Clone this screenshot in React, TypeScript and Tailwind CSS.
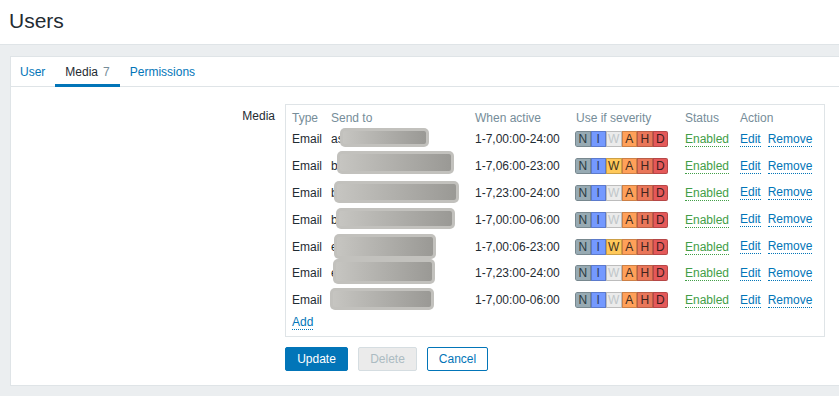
import React from 'react'

interface MediaRow {
  period: string
  prefix: string
  warn: boolean
  blob: { left: number; top: number; w: number; h: number }
}

const rows: MediaRow[] = [
  { period: '1-7,00:00-24:00', prefix: 'as', warn: false, blob: { left: 9, top: 2, w: 89, h: 19 } },
  { period: '1-7,06:00-23:00', prefix: 'b', warn: true, blob: { left: 6, top: -2, w: 117, h: 23 } },
  { period: '1-7,23:00-24:00', prefix: 'b', warn: false, blob: { left: 3, top: 1, w: 125, h: 22 } },
  { period: '1-7,00:00-06:00', prefix: 'b', warn: false, blob: { left: 5, top: 2, w: 119, h: 21 } },
  { period: '1-7,00:06-23:00', prefix: 'e', warn: true, blob: { left: 3, top: 1, w: 102, h: 25 } },
  { period: '1-7,23:00-24:00', prefix: 'e', warn: false, blob: { left: 2, top: -1, w: 102, h: 25 } },
  { period: '1-7,00:00-06:00', prefix: '', warn: false, blob: { left: -1, top: 1, w: 104, h: 22 } },
]

function Severity({ warn }: { warn: boolean }) {
  const cell = 'w-[15.5px] h-[16px] flex items-center justify-center border border-black/20 text-[12px]'
  return (
    <div className="flex rounded-[2px] overflow-hidden">
      <div className={`${cell} bg-[#97aab3] text-[#2b3a42] rounded-l-[2px]`}>N</div>
      <div className={`${cell} bg-[#7499ff] text-[#2b3a60]`}>I</div>
      {warn ? (
        <div className={`${cell} bg-[#ffc859] text-[#3d3420]`}>W</div>
      ) : (
        <div className={`${cell} bg-[#ebebeb] text-[#c0c6c9]`}>W</div>
      )}
      <div className={`${cell} bg-[#ffa059] text-[#3d2a1e]`}>A</div>
      <div className={`${cell} bg-[#e97659] text-[#3d241e]`}>H</div>
      <div className={`${cell} bg-[#e45959] text-[#3d1e1e] rounded-r-[2px]`}>D</div>
    </div>
  )
}

export default function App() {
  return (
    <div
      className="w-[839px] h-[396px] overflow-hidden bg-[#ebeef0] text-[12px] text-[#1f2c33]"
      style={{ fontFamily: '"Liberation Sans", Arial, sans-serif' }}
    >
      <div className="h-[45px] bg-white border-b border-[#dfe4e7] pl-[9px] pt-[9px]">
        <h1 className="text-[21px] leading-[24px] text-[#1f2c33]">Users</h1>
      </div>

      <div className="mt-[11px] ml-[10px] w-[840px] h-[330px] bg-white border border-[#dfe4e7]">
        <div className="flex h-[30px] border-b border-[#dfe4e7]">
          <div className="pl-[9px] pr-[10px] flex items-center text-[#0275b8]">User</div>
          <div className="px-[10px] flex items-center border-b-[3px] border-[#0275b8] pt-[3px] -mb-px">
            Media <span className="ml-[5px] text-[#768d99]">7</span>
          </div>
          <div className="px-[10px] flex items-center text-[#0275b8]">Permissions</div>
        </div>

        <div className="flex pt-[17px]">
          <div className="w-[274px] text-right pt-[3px] pr-[10px]">Media</div>
          <div>
            <div className="w-[540px] border border-[#dfe4e7] pt-[6px] pb-[4px] px-[6px]">
              <div className="grid grid-cols-[39px_144px_101px_109px_55px_1fr] h-[15px] items-center text-[#768d99] leading-[15px]">
                <div>Type</div>
                <div>Send to</div>
                <div>When active</div>
                <div>Use if severity</div>
                <div>Status</div>
                <div>Action</div>
              </div>
              {rows.map((r, i) => (
                <div
                  key={i}
                  className="grid grid-cols-[39px_144px_101px_109px_55px_1fr] h-[26.8px] items-center"
                >
                  <div>Email</div>
                  <div className="relative h-full flex items-center">
                    <span>{r.prefix}</span>
                    <div
                      className="absolute rounded-[5px] bg-[#c2c1bd] p-[3px]"
                      style={{ left: r.blob.left, top: r.blob.top, width: r.blob.w, height: r.blob.h }}
                    >
                      <div className="w-full h-full rounded-[2px] bg-gradient-to-r from-[#c6c5c1] to-[#9a9995]" />
                    </div>
                  </div>
                  <div>{r.period}</div>
                  <div className="-ml-px">
                    <Severity warn={r.warn} />
                  </div>
                  <div>
                    <span className="text-[#429e47] border-b border-dotted border-[#429e47] leading-[14px] inline-block">Enabled</span>
                  </div>
                  <div className="flex gap-[7px]">
                    <span className="text-[#0275b8] border-b border-dotted border-[#0275b8] leading-[14px]">Edit</span>
                    <span className="text-[#0275b8] border-b border-dotted border-[#0275b8] leading-[14px]">Remove</span>
                  </div>
                </div>
              ))}
              <div className="h-[18px] flex items-center">
                <span className="text-[#0275b8] border-b border-dotted border-[#0275b8] leading-[14px]">Add</span>
              </div>
            </div>

            <div className="flex mt-[10px]">
              <button className="w-[63px] h-[24px] bg-[#0275b8] text-white rounded-[2px] border border-[#0275b8]">
                Update
              </button>
              <button
                disabled
                className="ml-[10px] w-[59px] h-[24px] bg-[#ebebeb] text-[#acbbc2] rounded-[2px] border border-[#d5dde1]"
              >
                Delete
              </button>
              <button className="ml-[10px] w-[61px] h-[24px] bg-white text-[#0275b8] rounded-[2px] border border-[#0275b8]">
                Cancel
              </button>
            </div>
          </div>
        </div>
      </div>
    </div>
  )
}
